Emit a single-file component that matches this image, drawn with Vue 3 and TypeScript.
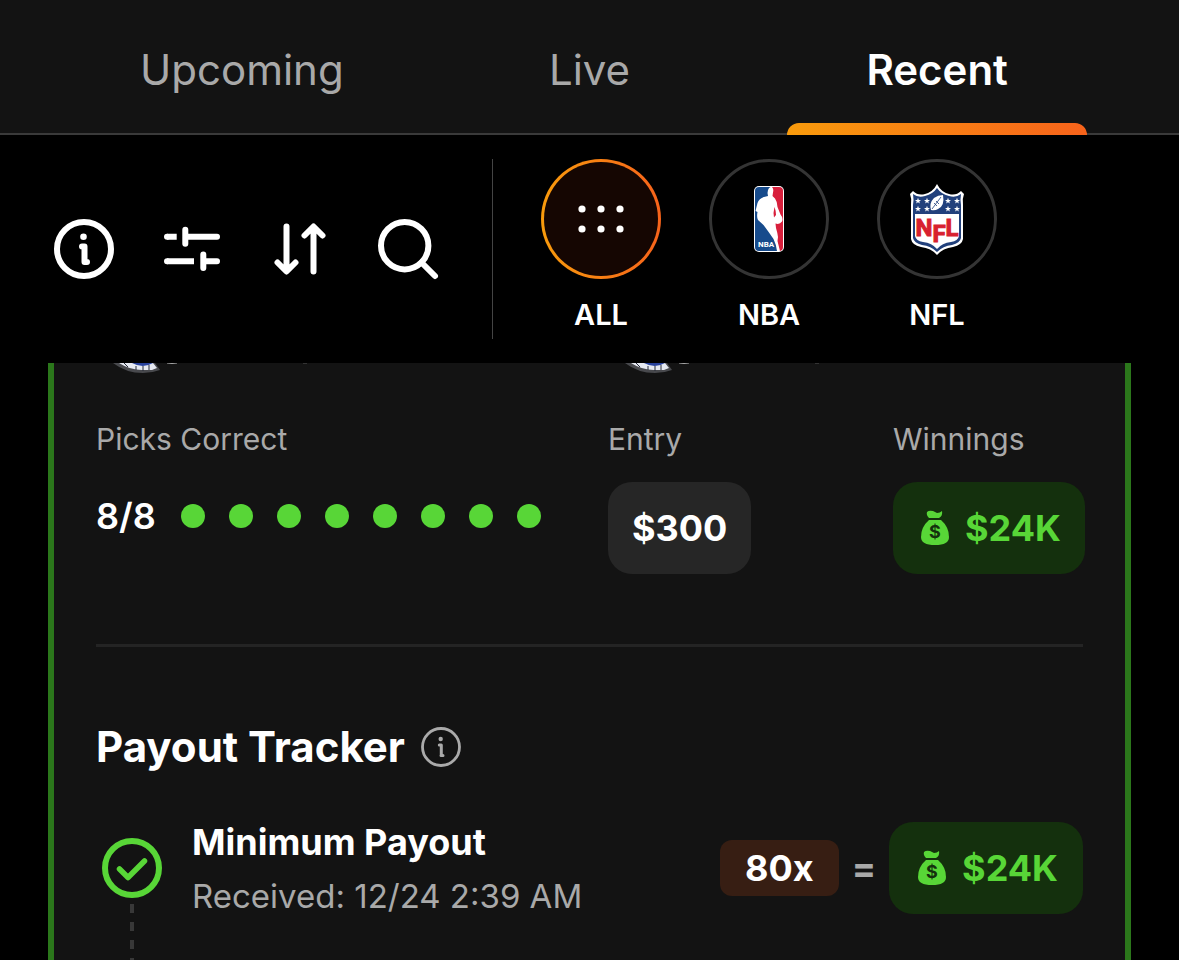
<script setup lang="ts">
import { ref } from 'vue'

type League = 'ALL' | 'NBA' | 'NFL'

const tabs = ['Upcoming', 'Live', 'Recent']
const activeTab = ref('Recent')
const leagues: League[] = ['ALL', 'NBA', 'NFL']
const activeLeague = ref<League>('ALL')
const picksTotal = 8
const stars = [[17, 18], [26, 18], [17, 26], [26, 26], [47, 18], [56, 18], [47, 26], [56, 26]]
</script>

<template>
  <div class="page">
    <nav class="tabs">
      <button
        v-for="tab in tabs"
        :key="tab"
        type="button"
        class="tab"
        :class="{ active: tab === activeTab }"
        @click="activeTab = tab"
      >
        {{ tab }}
      </button>
    </nav>

    <section class="filters">
      <div class="tools">
        <button type="button" class="tool" aria-label="Information">
          <svg viewBox="0 0 72 72" fill="none" stroke="#fff" stroke-linecap="round" stroke-linejoin="round">
            <circle cx="36" cy="36" r="27" stroke-width="6" />
            <circle cx="35.500" cy="23.700" r="3.300" fill="#fff" stroke="none" />
            <path d="M34 33.500H36.500V49H39" stroke-width="6" />
          </svg>
        </button>
        <button type="button" class="tool" aria-label="Filters">
          <svg viewBox="0 0 72 72" fill="none" stroke="#fff" stroke-width="6">
            <path d="M11 23.700H20.700M11 48.300H38" />
            <path d="M11 23.700H11.100M11 48.300H11.100M29.300 16.700V30.700M29.300 23.700H61M47.300 41.500V55M47.300 48.300H61" stroke-linecap="round" />
          </svg>
        </button>
        <button type="button" class="tool" aria-label="Sort">
          <svg viewBox="0 0 72 72" fill="none" stroke="#fff" stroke-width="6" stroke-linecap="round" stroke-linejoin="round">
            <path d="M22.500 13.500V58M13.500 49.500L22.500 58.500L31.500 49.500" />
            <path d="M49.500 58.500V14M40.500 22.500L49.500 13.500L58.500 22.500" />
          </svg>
        </button>
        <button type="button" class="tool" aria-label="Search">
          <svg viewBox="0 0 72 72" fill="none" stroke="#fff" stroke-width="6" stroke-linecap="round">
            <circle cx="32.700" cy="32.700" r="23.700" />
            <path d="M49.500 49.500L63 63" />
          </svg>
        </button>
      </div>

      <div class="leagues">
        <button
          v-for="league in leagues"
          :key="league"
          type="button"
          class="league"
          :class="{ active: league === activeLeague }"
          @click="activeLeague = league"
        >
          <span class="ring">
            <svg v-if="league === 'ALL'" class="glyph" viewBox="0 0 72 72" fill="#fff">
              <template v-for="y in [26, 46]" :key="y">
                <circle v-for="x in [17, 36, 55]" :key="x" :cx="x" :cy="y" r="3.600" />
              </template>
            </svg>
            <svg v-else-if="league === 'NBA'" class="glyph" viewBox="0 0 72 72">
              <defs>
                <clipPath id="nba-plate"><rect x="22" y="4" width="28" height="64" rx="4" /></clipPath>
              </defs>
              <rect x="21" y="3" width="30" height="66" rx="5" fill="#fff" />
              <g clip-path="url(#nba-plate)">
                <rect x="22" y="4" width="24" height="64" fill="#174b8c" />
                <path d="M37 4H50V68H45L42 48L37 40Z" fill="#d81f3c" />
                <path d="M35 7Q36 3.500 39 4Q41 6 40 9.500L39.500 13L42 15.500Q44.500 19 44.500 24L47.500 31.500Q50.500 35 49 38.500Q46.500 42 42.500 40.500L43 45Q44.500 50 45 54L44.500 58L47 68H44Q43 61 40.500 56Q35 48 30.500 42L25 37Q23.500 34 24.500 29L22.500 28L24.500 20Q26 15.500 31 14L35 13L34.500 10Z" fill="#fff" />
                <path d="M41.500 24Q43 28 43 32L41 34.500L40.500 30Z" fill="#d81f3c" />
              </g>
              <text class="nba-mark" x="25" y="64">NBA</text>
            </svg>
            <svg v-else class="glyph" viewBox="0 0 72 72">
              <path d="M36 1Q40 9 48 11Q55 13 60 8L63 11Q61 16 62 22V56Q61 62 52 64Q42 65 36 72Q30 65 20 64Q11 62 10 56V22Q11 16 9 11L12 8Q17 13 24 11Q32 9 36 1Z" fill="#fff" />
              <path d="M36 5Q40 11 48 13Q55 15 60 11Q59 17 60 22V55Q59 60 51 62Q42 63 36 69Q30 63 21 62Q13 60 12 55V22Q13 17 12 11Q17 15 24 13Q32 11 36 5Z" fill="#21407c" />
              <path d="M14 31H58V53Q57 58 50 59Q41 60 36 66Q31 60 22 59Q15 58 14 53Z" fill="#fff" />
              <path
                v-for="([x, y], i) in stars"
                :key="i"
                d="M0 -3.200L.8 -1H3L1.200 .4L1.900 2.600L0 1.300L-1.900 2.600L-1.200 .4L-3 -1H-.8Z"
                :transform="`translate(${x} ${y})`"
                fill="#fff"
              />
              <path d="M42 12Q44 23 37 26Q34 28 30 27Q28 20 33 15Q37 12 42 12Z" fill="#fff" />
              <path d="M31 26L40 14M33 20L36 23M35 18L38 21" stroke="#21407c" stroke-width=".8" />
              <text class="nfl-mark" x="36" y="53" text-anchor="middle">N<tspan dy="6">F</tspan><tspan dy="-6">L</tspan></text>
            </svg>
          </span>
          <span class="league-name">{{ league }}</span>
        </button>
      </div>
    </section>

    <main class="feed">
      <article class="card">
        <div class="players">
          <svg v-for="n in 2" :key="n" class="player" viewBox="0 0 220 12" aria-hidden="true">
            <path d="M17 0Q30 10 47 10Q56 10 64 7L59 0Z" fill="#48494d" />
            <path d="M23 0Q34 7 46 7H56L61 5L57 0Z" fill="#e6e9f1" />
            <path d="M36 0Q47 6 57 0Z" fill="#27419b" />
            <path d="M28 0L32 4M40 3V7M47 3V8M53 2V7" stroke="#252a38" />
            <path d="M71 0Q76 1 81 0" stroke="#aaa" fill="none" />
            <path d="M207 0H211" stroke="#555" />
          </svg>
        </div>

        <div class="summary">
          <div class="stat">
            <h3 class="label">Picks Correct</h3>
            <div class="picks">
              <strong class="score">8/8</strong>
              <span class="dots"><i v-for="n in picksTotal" :key="n" class="dot"></i></span>
            </div>
          </div>
          <div class="stat">
            <h3 class="label">Entry</h3>
            <strong class="chip">$300</strong>
          </div>
          <div class="stat">
            <h3 class="label">Winnings</h3>
            <strong class="chip win">
              <svg class="bag" viewBox="0 0 36 36" fill="currentColor">
                <path d="M10 2Q12 0 16 1Q18 2 20 3Q23 3 25 1Q26 6 22 8H12Q9 5 10 2Z" />
                <path d="M12 10H24Q32 17 32 27Q32 35 18 35Q4 35 4 27Q4 17 12 10Z" />
                <text class="bag-sign" x="18" y="28" text-anchor="middle">$</text>
              </svg>
              $24K
            </strong>
          </div>
        </div>

        <hr class="rule" />

        <header class="tracker-head">
          <h2 class="tracker-title">Payout Tracker</h2>
          <button type="button" class="help" aria-label="About the payout tracker">
            <svg viewBox="0 0 40 40" fill="none" stroke="#aaa" stroke-linecap="round" stroke-linejoin="round">
              <circle cx="20" cy="20" r="18.500" stroke-width="2.800" />
              <circle cx="19.700" cy="12" r="2.200" fill="#aaa" stroke="none" />
              <path d="M18.300 18H20.300V28.500M20 28.500H22" stroke-width="3" />
            </svg>
          </button>
        </header>

        <div class="step">
          <div class="status">
            <svg class="check" viewBox="0 0 60 60" fill="none" stroke="#58d637" stroke-width="6">
              <circle cx="30" cy="30" r="27" />
              <path d="M17.500 31L26 39.500L42.500 23" stroke-width="5.500" stroke-linecap="round" stroke-linejoin="round" />
            </svg>
            <span class="connector"></span>
          </div>
          <div class="step-text">
            <h3 class="step-title">Minimum Payout</h3>
            <p class="step-note">Received: 12/24 2:39 AM</p>
          </div>
          <div class="payout">
            <strong class="multiplier">80x</strong>
            <span class="equals">=</span>
            <strong class="chip win">
              <svg class="bag" viewBox="0 0 36 36" fill="currentColor">
                <path d="M10 2Q12 0 16 1Q18 2 20 3Q23 3 25 1Q26 6 22 8H12Q9 5 10 2Z" />
                <path d="M12 10H24Q32 17 32 27Q32 35 18 35Q4 35 4 27Q4 17 12 10Z" />
                <text class="bag-sign" x="18" y="28" text-anchor="middle">$</text>
              </svg>
              $24K
            </strong>
          </div>
        </div>
      </article>
    </main>
  </div>
</template>

<style>
body {
  background: #000;
}
</style>

<style scoped>
.page {
  display: flex;
  flex-direction: column;
  height: 100vh;
  overflow: hidden;
  background: #000;
  color: #fff;
  font-family: Inter, "Liberation Sans", sans-serif;
}
button {
  padding: 0;
  border: 0;
  background: none;
  color: inherit;
  font: inherit;
  cursor: pointer;
}
h2, h3, p {
  margin: 0;
}
svg {
  display: block;
}
.tabs {
  display: grid;
  flex: none;
  grid-template-columns: repeat(3, 1fr);
  padding: 0 68px;
  background: #131313;
  box-shadow: inset 0 -2px #3a3a3a;
}
.tab {
  position: relative;
  height: 135px;
  padding: 8px 0 4px;
  box-sizing: border-box;
  color: #a9a9a9;
  font-size: 42px;
  line-height: 48px;
}
.tab.active {
  color: #fff;
  font-weight: 600;
}
.tab.active::after {
  content: "";
  position: absolute;
  right: 24px;
  bottom: 0;
  left: 24px;
  height: 12px;
  border-radius: 12px 12px 0 0;
  background: linear-gradient(90deg, #f99b0c, #f7631b);
}
.filters {
  display: flex;
  flex: none;
  padding: 24px 48px;
}
.tools {
  display: flex;
  align-items: center;
  gap: 36px;
  padding-right: 48px;
  border-right: 1px solid #444;
}
.tool,
.tool svg,
.glyph {
  width: 72px;
  height: 72px;
}
.leagues {
  display: flex;
  gap: 48px;
  height: 180px;
  padding-left: 48px;
}
.league {
  display: flex;
  flex-direction: column;
  align-items: center;
  justify-content: flex-start;
  gap: 18px;
  width: 120px;
}
.ring {
  display: flex;
  align-items: center;
  justify-content: center;
  width: 120px;
  height: 120px;
  box-sizing: border-box;
  border: 3px solid #343434;
  border-radius: 50%;
}
.league.active .ring {
  border-color: transparent;
  background:
    linear-gradient(#150602, #150602) padding-box,
    linear-gradient(90deg, #f99b0c, #f7631b) border-box;
}
.league-name {
  font-size: 29px;
  font-weight: 600;
  line-height: 36px;
}
.nba-mark {
  fill: #fff;
  font: bold 8px Roboto, sans-serif;
}
.nfl-mark {
  fill: #d8202f;
  stroke: #d8202f;
  font: bold 24px Roboto, sans-serif;
}
.feed {
  flex: 1;
  min-height: 0;
  padding: 0 48px;
  overflow: hidden;
}
.card {
  min-height: 100%;
  padding: 0 42px;
  box-sizing: border-box;
  border: solid #2b771b;
  border-width: 0 6px;
  background: #131313;
}
.players {
  display: grid;
  grid-template-columns: 512fr 475fr;
  height: 58px;
}
.player {
  width: 220px;
  height: 12px;
}
.summary {
  display: grid;
  grid-template-columns: 512fr 285fr 190px;
}
.stat {
  display: flex;
  flex-direction: column;
  align-items: flex-start;
  gap: 25px;
}
.label {
  color: #a9a9a9;
  font-size: 30px;
  font-weight: 400;
  line-height: 36px;
}
.picks {
  display: flex;
  align-items: center;
  gap: 25px;
  height: 68px;
}
.score {
  font-size: 36px;
  font-weight: 600;
}
.dots {
  display: flex;
  gap: 24px;
}
.dot {
  width: 24px;
  height: 24px;
  border-radius: 50%;
  background: #58d637;
}
.chip {
  display: flex;
  align-items: center;
  gap: 12px;
  height: 92px;
  padding: 0 24px;
  box-sizing: border-box;
  border-radius: 24px;
  background: #262626;
  font-size: 36px;
  font-weight: 700;
}
.win {
  background: #14300d;
  color: #58d637;
}
.bag {
  width: 36px;
  height: 36px;
}
.bag-sign {
  fill: #14300d;
  font: 700 18px Inter, sans-serif;
}
.rule {
  height: 3px;
  margin: 70px 0 72px;
  border: 0;
  background: #242424;
}
.tracker-head {
  display: flex;
  align-items: center;
  gap: 16px;
  height: 56px;
}
.tracker-title {
  font-size: 42px;
  font-weight: 700;
  line-height: 48px;
}
.help,
.help svg {
  width: 40px;
  height: 40px;
}
.step {
  display: flex;
  align-items: flex-start;
  gap: 24px;
  margin-top: 47px;
}
.status {
  display: flex;
  flex-direction: column;
  align-items: center;
  gap: 6px;
  width: 72px;
  padding-top: 16px;
}
.check {
  width: 60px;
  height: 60px;
}
.connector {
  width: 4px;
  height: 120px;
  background: repeating-linear-gradient(#383838 0 9px, transparent 9px 18px);
}
.step-text {
  flex: 1;
}
.step-title {
  font-size: 36px;
  font-weight: 700;
  line-height: 40px;
}
.step-note {
  margin-top: 13px;
  color: #a9a9a9;
  font-size: 33px;
  line-height: 42px;
}
.payout {
  display: flex;
  align-items: center;
  gap: 13px;
}
.payout .chip {
  padding: 0 25px;
}
.multiplier {
  padding: 0 25px;
  border-radius: 12px;
  background: #371e13;
  font-size: 36px;
  line-height: 56px;
}
.equals {
  color: #a9a9a9;
  font-size: 36px;
  font-weight: 700;
}
</style>
